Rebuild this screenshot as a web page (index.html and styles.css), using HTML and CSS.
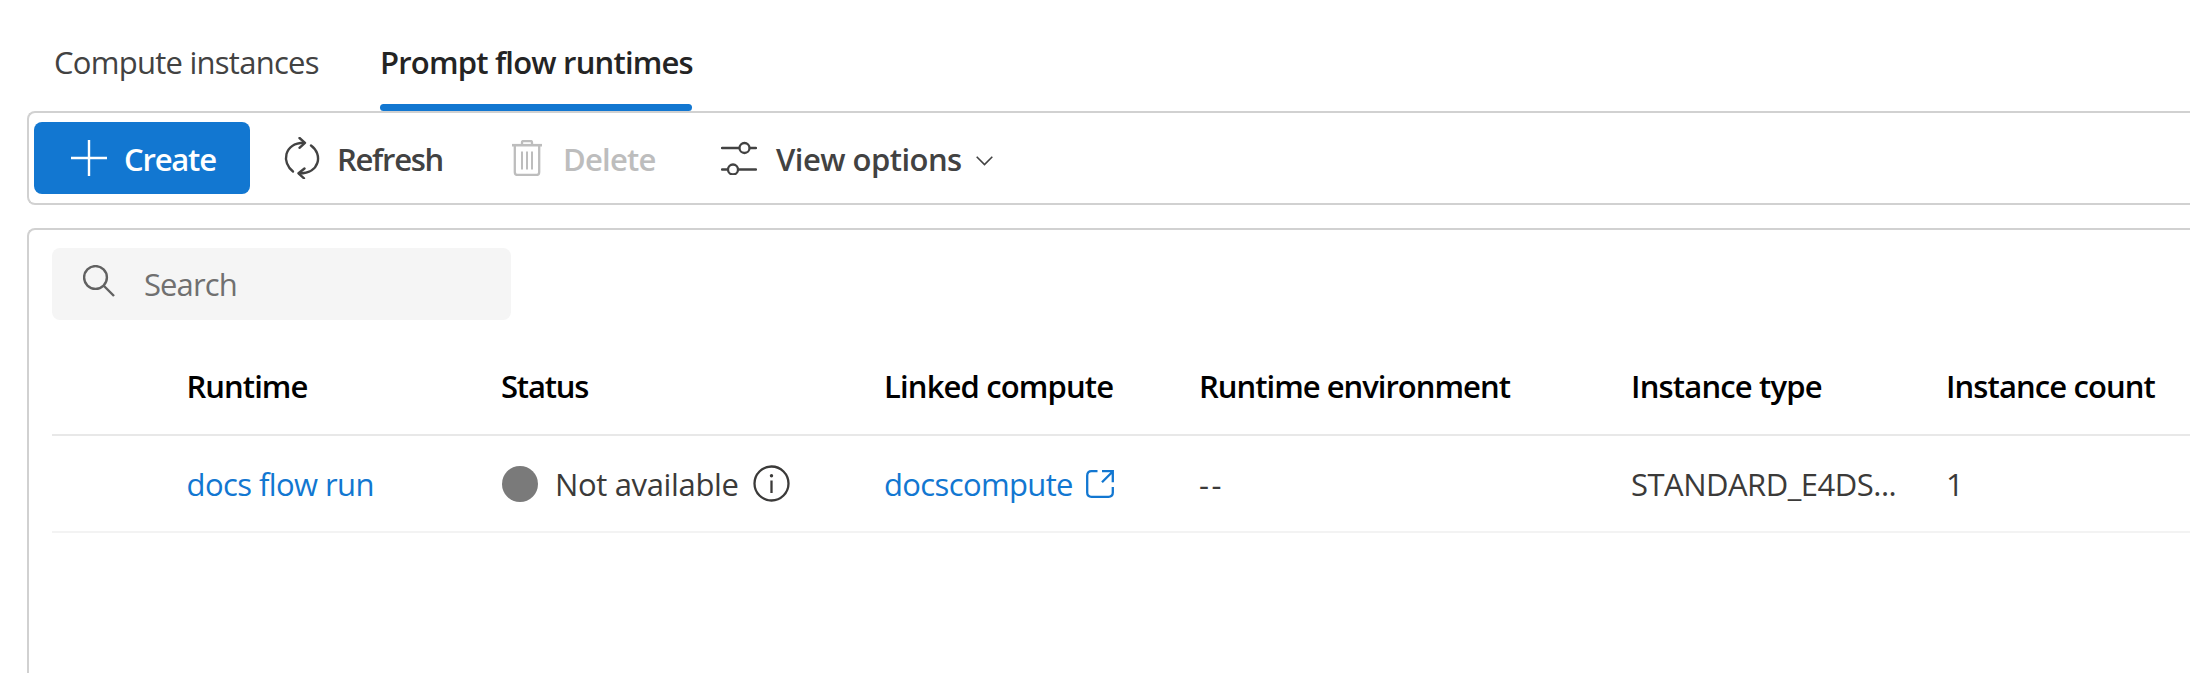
FILE: index.html
```html
<!DOCTYPE html>
<html lang="en">
<head>
<meta charset="utf-8">
<title>Compute</title>
<link rel="stylesheet" href="styles.css">
</head>
<body>
<nav class="tabs">
  <a class="tab tab-compute">Compute instances</a>
  <a class="tab tab-runtimes active">Prompt flow runtimes</a>
</nav>
<div class="toolbar">
  <button class="btn primary">
    <svg class="icon-add" width="36" height="36" viewBox="0 0 36 36" fill="none" stroke="currentColor" stroke-width="2.400"><path d="M18 0v36M0 18h36"/></svg>
    <span class="label-create">Create</span>
  </button>
  <button class="btn refresh">
    <svg class="icon-refresh" width="36" height="42" viewBox="0 0 36 42" fill="none" stroke="currentColor" stroke-width="2.400" stroke-linecap="round" stroke-linejoin="round"><path d="M9 34.500C-2.500 26-.5 6 20 5.700"/><path d="M15.500 1l5.500 4.800-5.500 5"/><path d="M27 8.500C39 17 36 36.500 15.500 36.500"/><path d="M20.500 31.500l-6 4.800 5.500 5"/></svg>
    <span class="label-refresh">Refresh</span>
  </button>
  <button class="btn delete" disabled>
    <svg class="icon-delete" width="30" height="36" viewBox="0 0 30 36" fill="none" stroke="currentColor" stroke-width="2.300"><path d="M0 5.200h30" stroke-width="2.600"/><path d="M10 5V2.500Q10 1 11.500 1h7Q20 1 20 2.500V5"/><path d="M2.800 6v26Q2.800 35 5.500 35h19Q27.200 35 27.200 32V6"/><path d="M10 11.500v18M15 11.500v18M20 11.500v18" stroke-width="2"/></svg>
    <span class="label-delete">Delete</span>
  </button>
  <button class="btn view">
    <svg class="icon-options" width="36" height="34" viewBox="0 0 36 34" fill="none" stroke="currentColor" stroke-width="2.300" stroke-linecap="round"><path d="M1 7h17M29 7h6M1 28.500h5.500M17.500 28.500H35"/><circle cx="23.500" cy="7" r="5"/><circle cx="12" cy="28.500" r="5"/></svg>
    <span class="label-view">View options</span>
    <svg class="icon-chevron" width="17" height="10" viewBox="0 0 17 10" fill="none" stroke="currentColor" stroke-width="1.600"><path d="M.7.800l7.800 7.800L16.300.800"/></svg>
  </button>
</div>
<main class="panel">
  <label class="search">
    <svg class="icon-search" width="32" height="32" viewBox="0 0 32 32" fill="none" stroke="currentColor" stroke-width="2.400"><circle cx="12.500" cy="12.500" r="11.400"/><path d="M20.500 20.500L31 31"/></svg>
    <span class="label-search">Search</span>
  </label>
  <div class="grid">
    <div class="row head">
      <span></span>
      <span class="h-runtime">Runtime</span>
      <span class="h-status">Status</span>
      <span class="h-linked">Linked compute</span>
      <span class="h-env">Runtime environment</span>
      <span class="h-type">Instance type</span>
      <span class="h-count">Instance count</span>
    </div>
    <div class="row">
      <span></span>
      <a class="link c-name">docs flow run</a>
      <span class="status"><i class="dot"></i><span class="c-status">Not available</span>
        <svg class="icon-info" width="37" height="37" viewBox="0 0 37 37" fill="none" stroke="currentColor" stroke-width="2.300"><circle cx="18.500" cy="18.500" r="17"/><path d="M18.500 15.500v12.500"/><circle cx="18.500" cy="10.800" r="1.700" fill="currentColor" stroke="none"/></svg>
      </span>
      <a class="link linked"><span class="c-linked">docscompute</span>
        <svg class="icon-open" width="28" height="28" viewBox="0 0 28 28" fill="none" stroke="currentColor" stroke-width="2.300"><path d="M11.500 1.200H5.500Q1.200 1.200 1.200 5.700v16.800Q1.200 26.800 5.500 26.800h17Q26.800 26.800 26.800 22.500V17"/><path d="M16 1.200h10.800v11M26.500 1.700L16 12.200"/></svg>
      </a>
      <span class="c-env">--</span>
      <span class="c-type">STANDARD_E4DS...</span>
      <span class="c-count">1</span>
    </div>
  </div>
</main>
</body>
</html>
```
FILE: styles.css
```css
* { box-sizing: border-box; }
body {
  margin: 0;
  height: 673px;
  overflow: hidden;
  display: flex;
  flex-direction: column;
  background: #fff;
  color: #3b3a39;
  font: 400 31px/42px "Open Sans", "Noto Sans", sans-serif;
  white-space: nowrap;
}
svg { display: block; flex: none; }

.tabs { display: flex; height: 111px; padding-left: 54px; flex: none; }
.tab { padding-top: 41px; color: #424242; }
.tab-compute { letter-spacing: -0.74px; width: 326px; }
.tab.active { width: 312px; font-weight: 600; color: #242424; position: relative; }
.tab.active::after {
  content: "";
  position: absolute;
  left: 0; right: 0; bottom: 0;
  height: 7px;
  border-radius: 3.500px;
  background: #1277d1;
}
.tab-runtimes { letter-spacing: -0.800px; }

.toolbar {
  flex: none;
  display: flex;
  height: 94px;
  margin-left: 27px;
  padding: 9px 0 0 5px;
  border: 2px solid #d1d1d1;
  border-right: 0;
  border-radius: 8px 0 0 8px;
}
.btn {
  display: flex;
  align-items: center;
  height: 72px;
  padding: 0;
  border: 0;
  background: none;
  color: #424242;
  font: inherit;
  font-weight: 600;
}
.btn span { padding-top: 2px; }
.primary { width: 216px; padding-left: 37px; gap: 17px; border-radius: 8px; background: #1277d1; color: #fff; }
.label-create { letter-spacing: -1.200px; }
.refresh { margin-left: 34px; gap: 17px; width: 228px; }
.label-refresh { letter-spacing: -1.280px; }
.delete { gap: 21px; width: 209px; color: #bdbdbd; }
.label-delete { letter-spacing: -0.760px; }
.view { gap: 19px; }
.label-view { letter-spacing: -0.530px; }
.icon-chevron { margin: 6px 0 0 -4.500px; }

.panel {
  flex: 1;
  margin: 23px 0 0 27px;
  padding: 18px 0 0 23px;
  border: 2px solid #d1d1d1;
  border-right: 0;
  border-bottom: 0;
  border-radius: 8px 0 0 0;
}
.search {
  display: flex;
  align-items: center;
  gap: 29px;
  width: 459px;
  height: 72px;
  padding-left: 31px;
  border-radius: 8px;
  background: #f5f5f5;
  color: #707070;
}
.icon-search { color: #616161; margin-top: -7px; }
.label-search { letter-spacing: -0.900px; }

.grid { margin-top: 18px; }
.row {
  display: grid;
  grid-template-columns: 134px 315px 383px 315px 432px 315px 1fr;
  align-items: center;
  height: 97px;
  border-bottom: 2px solid #f3f3f3;
}
.head { height: 98px; border-color: #e8e8e8; font-weight: 600; color: #000; }
.h-runtime { letter-spacing: -0.950px; padding-left: 0.500px; }
.h-status { letter-spacing: -1.180px; }
.h-linked { letter-spacing: -0.850px; }
.h-env { letter-spacing: -0.990px; }
.h-type { letter-spacing: -0.820px; }
.h-count { letter-spacing: -0.900px; }
.link { color: #1277d1; }
.c-name { letter-spacing: -0.580px; padding-left: 0.500px; }
.status, .linked { display: flex; align-items: center; }
.dot { width: 36px; height: 36px; margin: 0 17px 0 1px; border-radius: 50%; background: #7a7a7a; }
.c-status { letter-spacing: -0.350px; }
.icon-info { margin: -1px 0 0 14px; }
.c-linked { letter-spacing: -0.640px; }
.icon-open { margin-left: 13px; }
.c-env { letter-spacing: 2.500px; }
.c-type { letter-spacing: -0.500px; }
```
